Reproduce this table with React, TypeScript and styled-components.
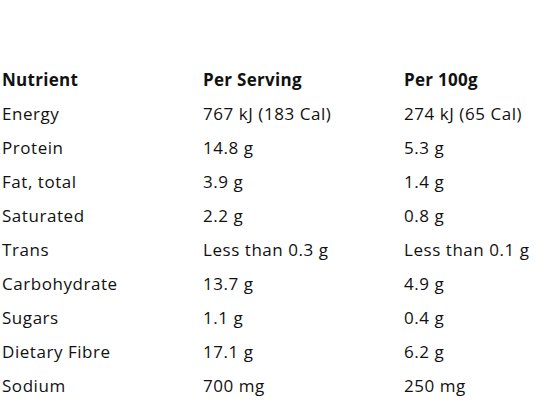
import styled, { createGlobalStyle } from 'styled-components';

const GlobalStyle = createGlobalStyle`
  html, body { margin: 0; padding: 0; background: #ffffff; }
  body { font-family: "Open Sans", "Noto Sans", sans-serif; color: #111; }
`;

const Page = styled.div`
  padding: 62px 0 0 2px;
`;

const Table = styled.div`
  display: grid;
  grid-template-columns: 201px 201px 1fr;
  grid-auto-rows: 34px;
  align-items: center;
`;

const Cell = styled.div<{ $head?: boolean }>`
  font-size: 17px;
  letter-spacing: ${p => (p.$head ? '0.3px' : '0.55px')};
  font-weight: ${p => (p.$head ? 700 : 400)};
  white-space: nowrap;
`;

const rows: [string, string, string][] = [
  ['Energy', '767 kJ (183 Cal)', '274 kJ (65 Cal)'],
  ['Protein', '14.8 g', '5.3 g'],
  ['Fat, total', '3.9 g', '1.4 g'],
  ['Saturated', '2.2 g', '0.8 g'],
  ['Trans', 'Less than 0.3 g', 'Less than 0.1 g'],
  ['Carbohydrate', '13.7 g', '4.9 g'],
  ['Sugars', '1.1 g', '0.4 g'],
  ['Dietary Fibre', '17.1 g', '6.2 g'],
  ['Sodium', '700 mg', '250 mg'],
];

export default function App() {
  return (
    <>
      <GlobalStyle />
      <Page>
        <Table>
          <Cell $head>Nutrient</Cell>
          <Cell $head>Per Serving</Cell>
          <Cell $head>Per 100g</Cell>
          {rows.map(r => r.map((c, i) => <Cell key={r[0] + i}>{c}</Cell>))}
        </Table>
      </Page>
    </>
  );
}
